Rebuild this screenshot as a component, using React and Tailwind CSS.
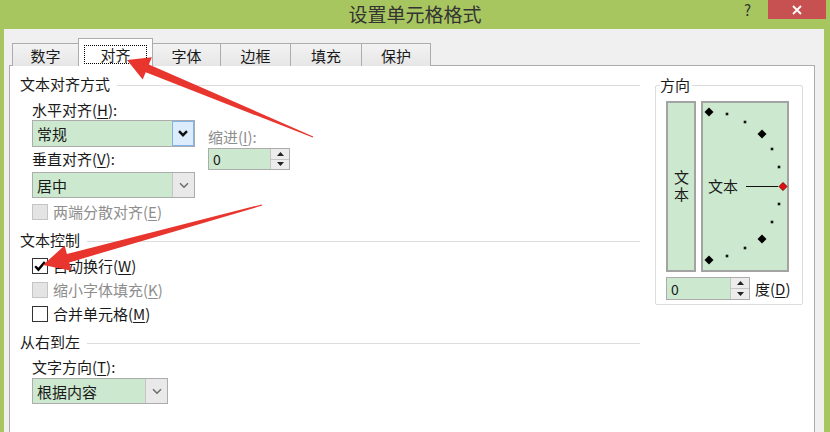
import React from "react";

function U({ children }) {
  return <span className="underline underline-offset-2 decoration-1">{children}</span>;
}

function Chevron({ dark }) {
  return (
    <svg width="10" height="7" viewBox="0 0 10 7">
      <path
        d="M1 1.2 L5 5.2 L9 1.2"
        fill="none"
        stroke={dark ? "#111" : "#6b6b6b"}
        strokeWidth={dark ? 2.4 : 1.5}
      />
    </svg>
  );
}

function Dropdown({ text, className, active }) {
  return (
    <div className={`flex border border-[#acacac] ${className}`}>
      <div className="flex-1 bg-[#cce8cf] pl-[4px] flex items-center text-[15px] leading-none">{text}</div>
      <div
        className={
          active
            ? "w-[22px] bg-[#dcecfc] border border-[#7eb4ea] flex items-center justify-center"
            : "w-[22px] bg-[#e9e9e9] border-l border-[#c5c5c5] flex items-center justify-center"
        }
      >
        <Chevron dark={active} />
      </div>
    </div>
  );
}

function Tri({ up }) {
  return (
    <svg width="7" height="4" viewBox="0 0 7 4">
      <path d={up ? "M0 4 L3.5 0 L7 4 Z" : "M0 0 L3.5 4 L7 0 Z"} fill="#222" />
    </svg>
  );
}

function Spin({ className, value }) {
  return (
    <div className={`flex border border-[#acacac] ${className}`}>
      <div className="flex-1 bg-[#cce8cf] pl-[4px] flex items-center text-[14px] leading-none">{value}</div>
      <div className="w-[19px] flex flex-col border-l border-[#c5c5c5] bg-[#ececec]">
        <div className="flex-1 flex items-center justify-center border-b border-[#c5c5c5]">
          <Tri up />
        </div>
        <div className="flex-1 flex items-center justify-center">
          <Tri />
        </div>
      </div>
    </div>
  );
}

function Check({ checked, disabled, children, className }) {
  return (
    <div className={`flex items-center h-[20px] pl-[12px] ${className}`}>
      <div
        className={
          disabled
            ? "w-[16px] h-[16px] border border-[#c4c4c4] bg-[#e4e4e4]"
            : "w-[16px] h-[16px] border border-[#333333] bg-white flex items-center justify-center"
        }
      >
        {checked && (
          <svg width="14" height="14" viewBox="0 0 14 14">
            <path d="M2.2 7.2 L5.4 10.6 L11.8 3" fill="none" stroke="#000" strokeWidth="2.4" />
          </svg>
        )}
      </div>
      <span className={`ml-[5px] text-[15px] leading-[20px] ${disabled ? "text-[#8e8e8e]" : ""}`}>{children}</span>
    </div>
  );
}

function Header({ children, className }) {
  return (
    <div className={`flex items-center h-[20px] ${className}`}>
      <span className="text-[15px] leading-[20px]">{children}</span>
      <div className="flex-1 h-px bg-[#dcdcdc] ml-[7px] mt-[3px]" />
    </div>
  );
}

function Tab({ children, className }) {
  return (
    <div
      className={`h-[23px] -ml-px border border-b-0 border-[#acacac] bg-gradient-to-b from-[#f3f3f3] to-[#e6e6e6] flex items-center justify-center text-[15px] leading-none ${className}`}
    >
      {children}
    </div>
  );
}

function arrow(tip, tail, headLen, headHalf, shaftHalf, tailHalf) {
  const dx = tail[0] - tip[0];
  const dy = tail[1] - tip[1];
  const len = Math.hypot(dx, dy);
  const ux = dx / len;
  const uy = dy / len;
  const nx = -uy;
  const ny = ux;
  const bx = tip[0] + ux * headLen;
  const by = tip[1] + uy * headLen;
  const pts = [
    [tip[0], tip[1]],
    [bx + nx * headHalf, by + ny * headHalf],
    [bx + nx * shaftHalf, by + ny * shaftHalf],
    [tail[0] + nx * tailHalf, tail[1] + ny * tailHalf],
    [tail[0] - nx * tailHalf, tail[1] - ny * tailHalf],
    [bx - nx * shaftHalf, by - ny * shaftHalf],
    [bx - nx * headHalf, by - ny * headHalf],
  ];
  return pts.map((p) => p[0].toFixed(1) + "," + p[1].toFixed(1)).join(" ");
}

function Diamond({ x, y, r, fill, stroke }) {
  return (
    <polygon
      points={`${x},${y - r} ${x + r},${y} ${x},${y + r} ${x - r},${y}`}
      fill={fill}
      stroke={stroke || "none"}
      strokeWidth="1"
    />
  );
}

export default function App() {
  const small = [
    [26, 13],
    [44, 21],
    [71, 48],
    [78, 66],
    [78, 103],
    [71, 121],
    [44, 147],
    [26, 155],
  ];
  const big = [
    [8, 11],
    [61, 33],
    [61, 138],
    [8, 159],
  ];
  return (
    <div className="relative w-[830px] h-[432px] overflow-hidden bg-[#a8c660] flex flex-col font-['Noto_Sans_CJK_SC','Noto_Sans',sans-serif] text-[#1a1a1a]">
      {/* title bar */}
      <div className="h-[29px] shrink-0 grid grid-cols-[1fr_auto_1fr]">
        <div />
        <div className="text-[19px] leading-[26px] text-[#333333] pt-[1px]">设置单元格格式</div>
        <div className="flex justify-end items-start pr-[4px]">
          <span className="text-[15px] leading-[18px] text-[#333] mr-[17px] mt-[1px]">?</span>
          <div className="w-[58px] h-[19px] bg-[#c75050] flex items-center justify-center">
            <svg width="10" height="10" viewBox="0 0 10 10">
              <path d="M1 1 L9 9 M9 1 L1 9" stroke="#fff" strokeWidth="1.8" />
            </svg>
          </div>
        </div>
      </div>

      {/* body */}
      <div className="flex-1 ml-[4px] mr-[6px] bg-[#f0f0f0] pl-[5px] pr-[9px] pt-[9px] flex flex-col">
        {/* tabs */}
        <div className="flex items-end h-[28px] ml-[3px] -mb-px relative z-10">
          <Tab className="w-[67px] ml-0">数字</Tab>
          <div className="relative h-[28px] w-[75px] -ml-px bg-white border border-b-0 border-[#acacac] flex items-start pt-[6px] pl-[5px]">
            <div className="w-[63px] h-[19px] border border-dotted border-black flex items-center justify-center text-[15px] leading-none">
              对齐
            </div>
          </div>
          <Tab className="w-[69px]">字体</Tab>
          <Tab className="w-[71px]">边框</Tab>
          <Tab className="w-[72px]">填充</Tab>
          <Tab className="w-[70px]">保护</Tab>
        </div>

        {/* panel */}
        <div className="flex-1 bg-white border border-b-0 border-[#acacac] flex pl-[10px] pt-[8px]">
          {/* left column */}
          <div className="w-[620px] flex flex-col">
            <Header>文本对齐方式</Header>
            <div className="h-[20px] mt-[6px] pl-[12px] text-[15px] leading-[20px]">
              水平对齐(<U>H</U>):
            </div>
            <div className="flex pl-[12px]">
              <div className="w-[163px] flex flex-col">
                <Dropdown text="常规" active className="h-[27px]" />
                <div className="h-[20px] mt-[2px] text-[15px] leading-[20px]">
                  垂直对齐(<U>V</U>):
                </div>
                <Dropdown text="居中" className="h-[26px] mt-[3px]" />
              </div>
              <div className="ml-[13px] flex flex-col">
                <div className="h-[20px] mt-[7px] text-[15px] leading-[20px] text-[#8e8e8e]">
                  缩进(<U>I</U>):
                </div>
                <Spin value="0" className="w-[82px] h-[22px] mt-[1px]" />
              </div>
            </div>
            <Check disabled className="mt-[4px]">
              两端分散对齐(<U>E</U>)
            </Check>

            <Header className="mt-[8px]">文本控制</Header>
            <Check checked className="mt-[6px]">
              自动换行(<U>W</U>)
            </Check>
            <Check disabled className="mt-[4px]">
              缩小字体填充(<U>K</U>)
            </Check>
            <Check className="mt-[4px]">
              合并单元格(<U>M</U>)
            </Check>

            <Header className="mt-[8px]">从右到左</Header>
            <div className="h-[20px] mt-[5px] pl-[12px] text-[15px] leading-[20px]">
              文字方向(<U>T</U>):
            </div>
            <div className="pl-[12px] mt-[1px]">
              <Dropdown text="根据内容" className="w-[136px] h-[26px]" />
            </div>
          </div>

          {/* orientation group */}
          <div className="relative ml-[15px] mt-[11px] w-[148px] h-[220px] border border-[#dcdcdc] rounded-[2px] self-start">
            <span className="absolute left-[4px] top-[-11px] bg-white pr-[2px] text-[15px] leading-[20px]">方向</span>
            <div className="flex mt-[15px] ml-[10px] gap-[5px]">
              <div className="w-[30px] h-[171px] bg-[#cce8cf] border-2 border-[#a3a3a3] flex items-center justify-center">
                <span className="[writing-mode:vertical-rl] [text-orientation:upright] text-[15px] leading-[20px] tracking-[2px]">
                  文本
                </span>
              </div>
              <div className="relative w-[88px] h-[171px] bg-[#cce8cf] border-2 border-[#a3a3a3]">
                <svg className="absolute left-[-2px] top-[-2px]" width="88" height="171" viewBox="0 0 88 171">
                  {small.map(([x, y], i) => (
                    <rect key={i} x={x - 1.3} y={y - 1.3} width="2.6" height="2.6" fill="#111" />
                  ))}
                  {big.map(([x, y], i) => (
                    <Diamond key={i} x={x} y={y} r={4.5} fill="#000" />
                  ))}
                  <line x1="45" y1="85.5" x2="77" y2="85.5" stroke="#111" strokeWidth="1" />
                  <Diamond x={82} y={85.5} r={4} fill="#e01010" stroke="#8a0000" />
                </svg>
                <span className="absolute left-[5px] top-[73px] text-[15px] leading-[20px]">文本</span>
              </div>
            </div>
            <div className="flex items-center mt-[5px] ml-[10px]">
              <Spin value="0" className="w-[84px] h-[23px]" />
              <span className="ml-[5px] text-[15px] leading-[20px]">
                度(<U>D</U>)
              </span>
            </div>
          </div>
        </div>
      </div>

      {/* red annotation arrows */}
      <svg className="absolute inset-0 pointer-events-none z-20" width="830" height="432" viewBox="0 0 830 432">
        <polygon points={arrow([127, 60], [313, 137], 22, 12, 4.2, 0.6)} fill="#e8352e" />
        <polygon points={arrow([43, 265], [262, 205], 26, 13, 4.4, 0.6)} fill="#e8352e" />
      </svg>
    </div>
  );
}
